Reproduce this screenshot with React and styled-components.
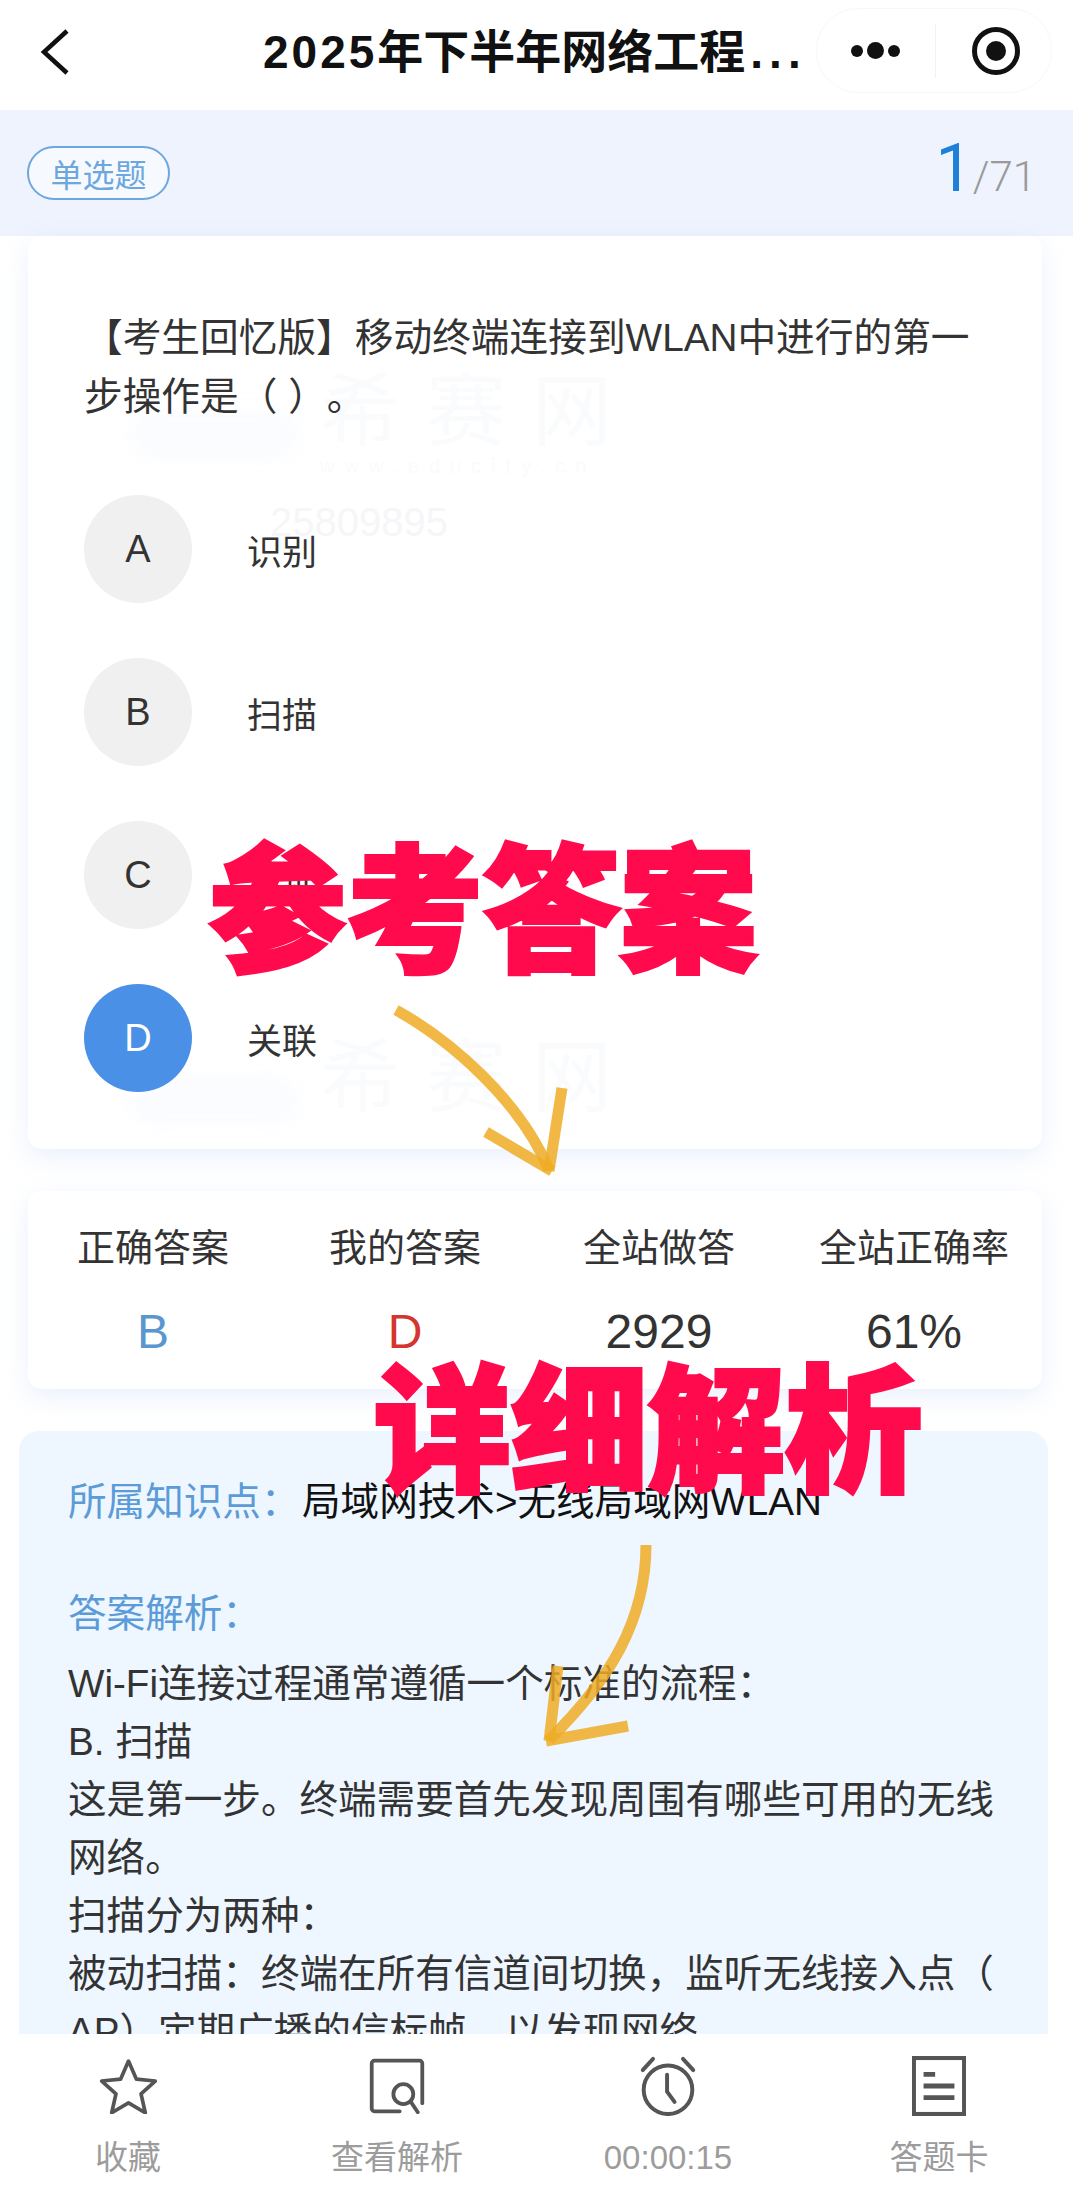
import React from 'react';
import styled, { createGlobalStyle } from 'styled-components';

const CJK = `"Liberation Sans", "Noto Sans CJK SC", sans-serif`;

const options = [
  { key: 'A', text: '识别' },
  { key: 'B', text: '扫描' },
  { key: 'C', text: '认证' },
  { key: 'D', text: '关联', picked: true },
];

const stats = [
  { label: '正确答案', value: 'B', color: '#5a97cf' },
  { label: '我的答案', value: 'D', color: '#d5352f' },
  { label: '全站做答', value: '2929', color: '#333' },
  { label: '全站正确率', value: '61%', color: '#333' },
];

const lines = [
  'Wi-Fi连接过程通常遵循一个标准的流程：',
  'B. 扫描',
  '这是第一步。终端需要首先发现周围有哪些可用的无线网络。',
  '扫描分为两种：',
  '被动扫描：终端在所有信道间切换，监听无线接入点（',
  'AP）定期广播的信标帧，以发现网络。',
];

const StarIcon = () => (
  <svg width="59" height="56" viewBox="0 0 64 60" fill="none" stroke="#555" strokeWidth="4" strokeLinejoin="round">
    <path d="M32 3l8.600 19.600 20.400 2-15.400 14 4.600 20.400L32 48.400 13.800 59l4.600-20.400L3 24.600l20.400-2z" />
  </svg>
);

const ReportIcon = () => (
  <svg width="56" height="56" viewBox="0 0 62 62" fill="none" stroke="#555" strokeWidth="4.200" strokeLinecap="round">
    <path d="M34 59H6a3 3 0 0 1-3-3V6a3 3 0 0 1 3-3h50a3 3 0 0 1 3 3v44" />
    <circle cx="38" cy="40" r="11" />
    <path d="M46 48l8 12" />
  </svg>
);

const ClockIcon = () => (
  <svg width="58" height="60" viewBox="0 0 62 64" fill="none" stroke="#555" strokeWidth="4.200" strokeLinecap="round">
    <circle cx="31" cy="36" r="26" />
    <path d="M30 20v18l8 11" />
    <path d="M4 15L15 3M58 15L47 3" />
  </svg>
);

const SheetIcon = () => (
  <svg width="54" height="60" viewBox="0 0 56 62" fill="none" stroke="#555" strokeWidth="4.200">
    <rect x="2" y="2" width="52" height="58" />
    <path d="M12 19h12M12 31h32M12 43h32" strokeWidth="5" />
  </svg>
);

const tabs = [
  { label: '收藏', icon: <StarIcon /> },
  { label: '查看解析', icon: <ReportIcon /> },
  { label: '00:00:15', icon: <ClockIcon /> },
  { label: '答题卡', icon: <SheetIcon /> },
];

const App = () => (
  <>
    <GlobalStyle />
    <Page>
      <NavBar>
        <BackIcon viewBox="0 0 30 46" fill="none" stroke="#111" strokeWidth="4.500">
          <path d="M27 2L4 23l23 21" />
        </BackIcon>
        <Title>
          <Wide>2025</Wide>年下半年网络工程<Ellipsis>...</Ellipsis>
        </Title>
        <Capsule>
          <Dots>
            <i />
            <b />
            <i />
          </Dots>
          <CapsuleLine />
          <Target />
        </Capsule>
      </NavBar>
      <Scroll>
        <TypeBar>
          <Tag>单选题</Tag>
          <Counter>
            <strong>1</strong>/71
          </Counter>
        </TypeBar>
        <QuestionCard>
          <Watermark $top={134}>
            <span>希赛网</span>
            <small>www.educity.cn</small>
            <em>25809895</em>
          </Watermark>
          <Watermark $top={800}>
            <span>希赛网</span>
          </Watermark>
          <Question>【考生回忆版】移动终端连接到WLAN中进行的第一步操作是（ ）。</Question>
          <Options>
            {options.map((o) => (
              <Option key={o.key}>
                <Badge $picked={o.picked}>{o.key}</Badge>
                <span>{o.text}</span>
              </Option>
            ))}
          </Options>
        </QuestionCard>
        <StatsCard>
          {stats.map((s) => (
            <Stat key={s.label}>
              <StatLabel>{s.label}</StatLabel>
              <StatValue $color={s.color}>{s.value}</StatValue>
            </Stat>
          ))}
        </StatsCard>
        <Analysis>
          <Knowledge>
            <BlueLabel>所属知识点：</BlueLabel>
            <span>局域网技术&gt;无线局域网WLAN</span>
          </Knowledge>
          <AnalysisTitle>答案解析：</AnalysisTitle>
          {lines.map((l) => (
            <p key={l}>{l}</p>
          ))}
        </Analysis>
      </Scroll>
      <TabBar>
        {tabs.map((t) => (
          <Tab key={t.label}>
            <TabIcon>{t.icon}</TabIcon>
            <span>{t.label}</span>
          </Tab>
        ))}
      </TabBar>
      <Sticker $left={209} $top={829}>参考答案</Sticker>
      <Sticker $left={374} $top={1349}>详细解析</Sticker>
      <ArrowLayer viewBox="0 0 1080 2196" fill="none" stroke="#efab25" strokeOpacity="0.85" strokeWidth="11">
        <path d="M396 1010C450 1040 520 1100 549 1170" />
        <path d="M562 1088L549 1171" />
        <path d="M486 1132L552 1171" />
        <path d="M646 1545C646 1620 610 1680 549 1740" />
        <path d="M558 1666L549 1741" />
        <path d="M628 1726L546 1741" />
      </ArrowLayer>
    </Page>
  </>
);

export default App;

const GlobalStyle = createGlobalStyle`
  * { box-sizing: border-box; }
  html, body { margin: 0; padding: 0; background: #fff; }
  body { font-family: ${CJK}; text-spacing-trim: space-all; }
`;

const Page = styled.div`
  position: relative;
  width: 1080px;
  height: 2196px;
  display: flex;
  flex-direction: column;
  overflow: hidden;
  background: #fff;
  color: #333;
`;

const NavBar = styled.header`
  position: relative;
  flex: 0 0 110px;
  display: flex;
  align-items: center;
  padding-left: 40px;
  background: #fff;
`;

const BackIcon = styled.svg`
  width: 30px;
  height: 46px;
  margin-bottom: 6px;
`;

const Title = styled.h1`
  position: absolute;
  left: 263px;
  top: 24px;
  margin: 0;
  font-size: 46px;
  line-height: 56px;
  font-weight: 700;
  color: #111;
  white-space: nowrap;
`;

const Wide = styled.span`
  letter-spacing: 3px;
`;

const Ellipsis = styled.span`
  margin-left: 5px;
  letter-spacing: 6px;
`;

const Capsule = styled.div`
  position: absolute;
  left: 816px;
  top: 8px;
  width: 236px;
  height: 85px;
  display: flex;
  align-items: center;
  border: 1px solid #f8f8f8;
  border-radius: 42px;
  padding-left: 34px;
`;

const Dots = styled.div`
  display: flex;
  align-items: center;
  gap: 4px;
  width: 52px;
  i, b {
    display: block;
    border-radius: 50%;
    background: #111;
  }
  i { width: 12px; height: 12px; }
  b { width: 17px; height: 17px; }
`;

const CapsuleLine = styled.div`
  width: 1px;
  height: 54px;
  margin: 0 36px 0 32px;
  background: #f2f2f2;
`;

const Target = styled.div`
  width: 48px;
  height: 48px;
  border-radius: 50%;
  border: 5px solid #111;
  position: relative;
  &::after {
    content: '';
    position: absolute;
    inset: 9px;
    border-radius: 50%;
    background: #111;
  }
`;

const Scroll = styled.main`
  flex: 1;
  min-height: 0;
  overflow: hidden;
  display: flex;
  flex-direction: column;
`;

const TypeBar = styled.div`
  flex: 0 0 126px;
  display: flex;
  align-items: center;
  justify-content: space-between;
  margin-right: 7px;
  padding: 0 37px 0 27px;
  background: #eef3fe;
`;

const Tag = styled.span`
  width: 143px;
  height: 54px;
  display: flex;
  align-items: center;
  justify-content: center;
  border: 2px solid #6ea6de;
  border-radius: 27px;
  background: #f6faff;
  color: #6ea6de;
  font-size: 32px;
`;

const Counter = styled.div`
  font-family: Roboto, sans-serif;
  color: #9a9a9a;
  font-size: 42px;
  font-weight: 300;
  line-height: 70px;
  strong {
    color: #1f80d8;
    font-size: 66px;
    font-weight: 400;
  }
`;

const cardStyle = `
  background: #fff;
  border-radius: 14px;
  box-shadow: 0 8px 24px rgba(160, 185, 240, 0.22);
`;

const QuestionCard = styled.section`
  ${cardStyle}
  position: relative;
  flex: 0 0 913px;
  margin: 0 38px 0 28px;
  padding: 72px 56px 0;
`;

const Watermark = styled.div`
  position: absolute;
  left: 292px;
  top: ${(p) => p.$top}px;
  display: flex;
  flex-direction: column;
  color: #f9fbfd;
  &::before {
    content: '';
    position: absolute;
    left: -190px;
    top: 40px;
    width: 170px;
    height: 50px;
    border-radius: 25px;
    background: #fbfcff;
    filter: blur(8px);
  }
  span { font-size: 80px; line-height: 84px; letter-spacing: 26px; }
  small { font-size: 20px; line-height: 24px; letter-spacing: 10px; }
  em { margin: 22px 0 0 -50px; font-style: normal; font-size: 40px; color: #f6f6f8; }
`;

const Question = styled.p`
  position: relative;
  margin: 0;
  font-size: 38.700px;
  line-height: 59px;
  color: #333;
`;

const Options = styled.div`
  position: relative;
  display: flex;
  flex-direction: column;
  gap: 55px;
  margin-top: 69px;
`;

const Option = styled.div`
  display: flex;
  align-items: center;
  gap: 55px;
  font-size: 35px;
  color: #333;
`;

const Badge = styled.div`
  width: 108px;
  height: 108px;
  border-radius: 50%;
  display: flex;
  align-items: center;
  justify-content: center;
  font-size: 38px;
  background: ${(p) => (p.$picked ? '#4a90e6' : '#f0f0f0')};
  color: ${(p) => (p.$picked ? '#fff' : '#333')};
`;

const StatsCard = styled.section`
  ${cardStyle}
  flex: 0 0 198px;
  margin: 42px 38px 0 28px;
  display: grid;
  grid-template-columns: 250px 254px 254px 1fr;
`;

const Stat = styled.div`
  display: flex;
  flex-direction: column;
  align-items: center;
  padding-top: 34px;
`;

const StatLabel = styled.span`
  font-size: 38px;
  line-height: 46px;
  color: #333;
  white-space: nowrap;
`;

const StatValue = styled.span`
  margin-top: 38px;
  font-size: 48px;
  line-height: 46px;
  color: ${(p) => p.$color};
`;

const Analysis = styled.section`
  flex: 1;
  margin: 42px 32px 0 19px;
  padding: 42px 34px 0 49px;
  background: #eef6ff;
  border-radius: 20px 20px 0 0;
  font-size: 38.600px;
  line-height: 58px;
  color: #333;
  p { margin: 0; white-space: pre-wrap; }
`;

const Knowledge = styled.div`
  display: flex;
  color: #111;
  line-height: 58px;
`;

const BlueLabel = styled.span`
  color: #5b9bd8;
  width: 234px;
`;

const AnalysisTitle = styled.div`
  margin: 54px 0 12px;
  color: #5b9bd8;
`;

const TabBar = styled.nav`
  flex: 0 0 162px;
  display: grid;
  grid-template-columns: 256px 282px 260px 1fr;
  background: #fff;
`;

const Tab = styled.div`
  display: flex;
  flex-direction: column;
  align-items: center;
  color: #9c9c9c;
  font-size: 33px;
  line-height: 40px;
  padding-top: 20px;
`;

const TabIcon = styled.div`
  height: 64px;
  margin-bottom: 20px;
  display: flex;
  align-items: center;
`;

const Sticker = styled.div`
  position: absolute;
  left: ${(p) => p.$left}px;
  top: ${(p) => p.$top}px;
  font-size: 137px;
  line-height: 170px;
  font-weight: 900;
  color: #ff0a4c;
  white-space: nowrap;
  -webkit-text-stroke: 4px #ff0a4c;
`;

const ArrowLayer = styled.svg`
  position: absolute;
  inset: 0;
  width: 1080px;
  height: 2196px;
  pointer-events: none;
`;
